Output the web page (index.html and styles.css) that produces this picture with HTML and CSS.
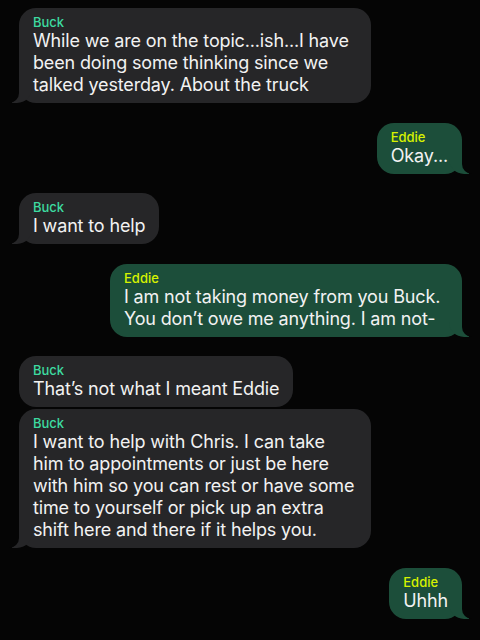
FILE: index.html
```html
<!DOCTYPE html>
<html lang="en">
<head>
    <meta charset="utf-8">
    <title>Messages</title>
    <link rel="stylesheet" href="styles.css">
</head>
<body>
    <div class="chat">
        <div class="msg buck tail">
            <span class="name">Buck</span>
            <p>While we are on the topic...ish...I have been doing some thinking since we talked yesterday. About the truck</p>
        </div>

        <div class="msg eddie tail">
            <span class="name">Eddie</span>
            <p>Okay...</p>
        </div>

        <div class="msg buck tail">
            <span class="name">Buck</span>
            <p>I want to help</p>
        </div>

        <div class="msg eddie tail">
            <span class="name">Eddie</span>
            <p>I am not taking money from you Buck. You don’t owe me anything. I am not-</p>
        </div>

        <div class="msg buck">
            <span class="name">Buck</span>
            <p>That’s not what I meant Eddie</p>
        </div>
        <div class="msg buck tail same">
            <span class="name">Buck</span>
            <p>I want to help with Chris. I can take him to appointments or just be here with him so you can rest or have some time to yourself or pick up an extra shift here and there if it helps you.</p>
        </div>

        <div class="msg eddie tail">
            <span class="name">Eddie</span>
            <p>Uhhh</p>
        </div>
    </div>
</body>
</html>
```

FILE: styles.css
```css
* {
    box-sizing: border-box;
    margin: 0;
    padding: 0;
}

body {
    background-color: #050505;
    font-family: Inter, "Noto Sans", sans-serif;
    color: #f2f2f2;
}

.chat {
    display: flex;
    flex-direction: column;
    gap: 19.5px;
    padding: 8px 18px 20px 19px;
}

.msg {
    position: relative;
    max-width: 352px;
    padding: 6px 14px 7px 14px;
    border-radius: 17px;
}

.msg p {
    font-size: 18px;
    line-height: 22px;
    letter-spacing: -0.15px;
}

.name {
    display: block;
    font-size: 13px;
    line-height: 16px;
    font-weight: 500;
}

.buck {
    align-self: flex-start;
    background: #262628;
}

.buck .name {
    color: #3ddba0;
}

.eddie {
    align-self: flex-end;
    background: #1c4e3a;
}

.eddie .name {
    color: #d7f200;
}

.same {
    margin-top: -17.5px;
}

/* tails */
.tail::before,
.tail::after {
    content: "";
    position: absolute;
    bottom: 0;
    height: 20px;
}

.buck.tail::before {
    left: -7px;
    width: 20px;
    background: #262628;
    border-bottom-right-radius: 15px;
}

.buck.tail::after {
    left: -10px;
    width: 10px;
    background: #050505;
    border-bottom-right-radius: 10px;
}

.eddie.tail::before {
    right: -7px;
    width: 20px;
    background: #1c4e3a;
    border-bottom-left-radius: 15px;
}

.eddie.tail::after {
    right: -10px;
    width: 10px;
    background: #050505;
    border-bottom-left-radius: 10px;
}
```
